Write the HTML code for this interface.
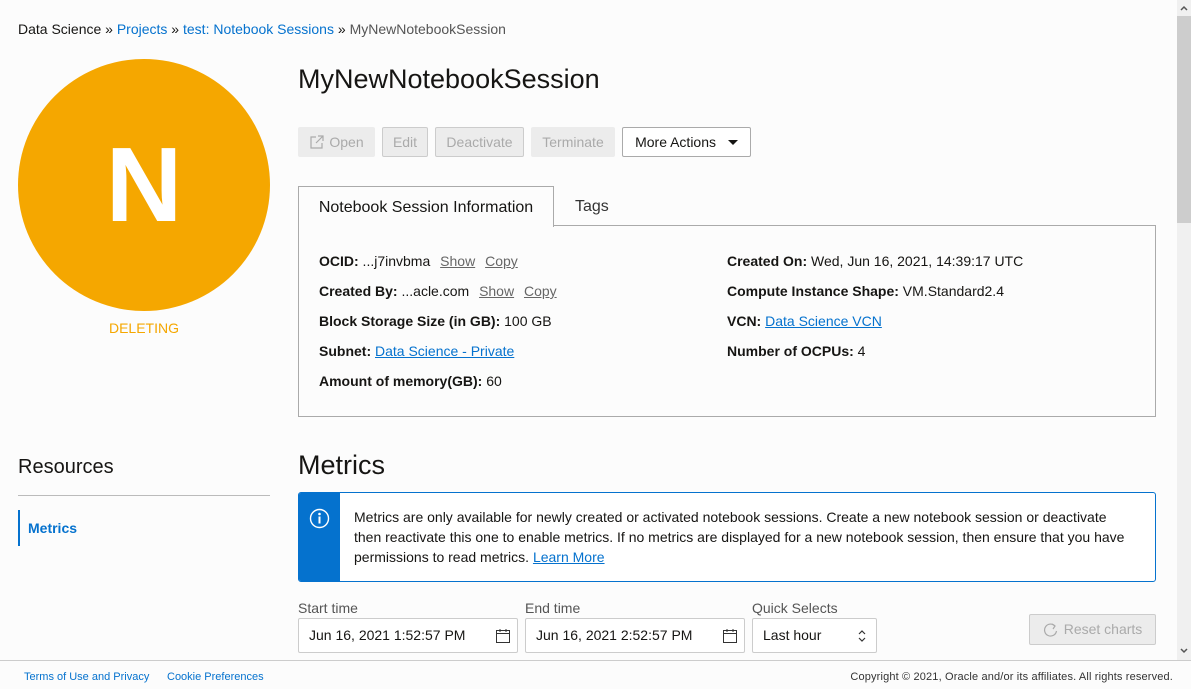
<!DOCTYPE html>
<html><head><style>
*{box-sizing:border-box;margin:0;padding:0}
body{width:1191px;height:689px;overflow:hidden;background:#fcfcfc;font-family:"Liberation Sans",Arial,sans-serif;color:#161513;position:relative;font-size:14px}
.a{position:absolute;white-space:nowrap}
a,.lnk{color:#0572ce;text-decoration:none}
.btn{position:absolute;top:127px;height:30px;border:1px solid #ccc;border-radius:2px;font-size:14px;line-height:28px;text-align:center;color:#aaa;background:#ececec}
.row{position:absolute;font-size:14px;white-space:nowrap}
.row b{font-weight:bold}
.u{text-decoration:underline}
.g{color:#666;text-decoration:underline;margin-left:6px}
.inp{position:absolute;top:618px;height:35px;border:1px solid #ccc;border-radius:2px;background:#fff;font-size:14px;line-height:33px;padding-left:10px}
.lbl{position:absolute;top:600px;font-size:14px;color:#555}
</style></head><body>
<div class="a" style="left:18px;top:21px;font-size:14px">Data Science » <a>Projects</a> » <a>test: Notebook Sessions</a> » <span style="color:#555">MyNewNotebookSession</span></div>
<div class="a" style="left:18px;top:59px;width:252px;height:252px;border-radius:50%;background:#f5a700;color:#fff;font-weight:bold;font-size:106px;text-align:center;line-height:252px">N</div>
<div class="a" style="left:18px;top:320px;width:252px;text-align:center;color:#f5a700;font-size:14px">DELETING</div>
<div class="a" style="left:298px;top:64px;font-size:27px">MyNewNotebookSession</div>
<div class="btn" style="left:298px;width:77px;border-color:#ececec"><svg width="16" height="16" viewBox="0 0 16 16" style="vertical-align:-3px;margin-right:4px"><path d="M7 3H2v11h11V9M9 2h5v5M14 2L7 9" fill="none" stroke="#aaa" stroke-width="1.2"/></svg>Open</div>
<div class="btn" style="left:382px;width:46px">Edit</div>
<div class="btn" style="left:435px;width:89px">Deactivate</div>
<div class="btn" style="left:531px;width:84px;border-color:#ececec">Terminate</div>
<div class="btn" style="left:622px;width:129px;background:#fff;color:#161513;border-color:#aaa">More Actions <span style="display:inline-block;border-left:5px solid transparent;border-right:5px solid transparent;border-top:5px solid #161513;vertical-align:2px;margin-left:8px"></span></div>
<div class="a" style="left:298px;top:225px;width:858px;height:192px;border:1px solid #aaa"></div>
<div class="a" style="left:298px;top:186px;width:256px;height:41px;border:1px solid #aaa;border-bottom:none;background:#fcfcfc;font-size:16px;line-height:42px;text-align:center">Notebook Session Information</div>
<div class="a" style="left:575px;top:198px;font-size:16px;color:#333">Tags</div>
<div class="row" style="left:319px;top:253px"><b>OCID:</b> ...j7invbma <span class="g">Show</span> <span class="g">Copy</span></div>
<div class="row" style="left:319px;top:283px"><b>Created By:</b> ...acle.com <span class="g">Show</span> <span class="g">Copy</span></div>
<div class="row" style="left:319px;top:313px"><b>Block Storage Size (in GB):</b> 100 GB</div>
<div class="row" style="left:319px;top:343px"><b>Subnet:</b> <a class="u">Data Science - Private</a></div>
<div class="row" style="left:319px;top:373px"><b>Amount of memory(GB):</b> 60</div>
<div class="row" style="left:727px;top:253px"><b>Created On:</b> Wed, Jun 16, 2021, 14:39:17 UTC</div>
<div class="row" style="left:727px;top:283px"><b>Compute Instance Shape:</b> VM.Standard2.4</div>
<div class="row" style="left:727px;top:313px"><b>VCN:</b> <a class="u">Data Science VCN</a></div>
<div class="row" style="left:727px;top:343px"><b>Number of OCPUs:</b> 4</div>
<div class="a" style="left:18px;top:456px;font-size:20px">Resources</div>
<div class="a" style="left:18px;top:495px;width:252px;height:1px;background:#bbb"></div>
<div class="a" style="left:18px;top:510px;height:36px;border-left:2px solid #0572ce;padding-left:8px;line-height:36px;font-weight:bold;color:#0572ce">Metrics</div>
<div class="a" style="left:298px;top:450px;font-size:27px">Metrics</div>
<div class="a" style="left:298px;top:492px;width:858px;height:90px;border:1px solid #0572ce;border-radius:3px;background:#fff;overflow:hidden;white-space:normal">
<div style="position:absolute;left:0;top:0;width:41px;height:90px;background:#0572ce"></div>
<svg style="position:absolute;left:10px;top:15px" width="21" height="21" viewBox="0 0 21 21"><circle cx="10.5" cy="10.5" r="9" fill="none" stroke="#fff" stroke-width="1.4"/><circle cx="10.5" cy="6" r="1.3" fill="#fff"/><rect x="9.5" y="8.5" width="2" height="7" fill="#fff"/></svg>
<div style="position:absolute;left:55px;top:14px;font-size:14px;line-height:20px;width:785px;white-space:normal">Metrics are only available for newly created or activated notebook sessions. Create a new notebook session or deactivate<br>then reactivate this one to enable metrics. If no metrics are displayed for a new notebook session, then ensure that you have<br>permissions to read metrics. <a class="u">Learn More</a></div></div>
<div class="lbl" style="left:298px">Start time</div>
<div class="lbl" style="left:525px">End time</div>
<div class="lbl" style="left:752px">Quick Selects</div>
<div class="inp" style="left:298px;width:220px">Jun 16, 2021 1:52:57 PM<svg style="position:absolute;right:6px;top:9px" width="16" height="16" viewBox="0 0 16 16"><rect x="1.5" y="2.5" width="13" height="12" fill="none" stroke="#333"/><path d="M1.5 5.5h13M5 1v3M11 1v3" stroke="#333"/></svg></div>
<div class="inp" style="left:525px;width:220px">Jun 16, 2021 2:52:57 PM<svg style="position:absolute;right:6px;top:9px" width="16" height="16" viewBox="0 0 16 16"><rect x="1.5" y="2.5" width="13" height="12" fill="none" stroke="#333"/><path d="M1.5 5.5h13M5 1v3M11 1v3" stroke="#333"/></svg></div>
<div class="inp" style="left:752px;width:125px">Last hour<svg style="position:absolute;right:10px;top:9px" width="8" height="16" viewBox="0 0 8 16"><path d="M1 6l3-3 3 3M1 10l3 3 3-3" fill="none" stroke="#333" stroke-width="1.2"/></svg></div>
<div class="a" style="left:1029px;top:614px;width:127px;height:31px;border:1px solid #ccc;border-radius:2px;background:#ececec;color:#aaa;line-height:29px;text-align:center;font-size:14px"><svg width="16" height="16" viewBox="0 0 16 16" style="vertical-align:-4px;margin-right:5px"><path d="M12 4A6 6 0 1 0 13.5 9" fill="none" stroke="#aaa" stroke-width="1.2"/><path d="M9 2l3 2-2 3" fill="none" stroke="#aaa" stroke-width="1.2"/></svg>Reset charts</div>
<div class="a" style="left:0;top:660px;width:1191px;height:29px;background:#fcfcfc;border-top:1px solid #ccc"></div>
<div class="a" style="left:24px;top:671px;font-size:11px;color:#0572ce">Terms of Use and Privacy</div>
<div class="a" style="left:167px;top:671px;font-size:11px;color:#0572ce">Cookie Preferences</div>
<div class="a" style="right:18px;top:671px;font-size:11px;color:#333;letter-spacing:0.15px">Copyright © 2021, Oracle and/or its affiliates. All rights reserved.</div>
<div class="a" style="left:1177px;top:0;width:14px;height:660px;background:#f0f0f0"></div>
<div class="a" style="left:1177px;top:16px;width:14px;height:207px;background:#cdcdcd"></div>
<svg class="a" style="left:1179px;top:4px" width="10" height="8" viewBox="0 0 10 8"><path d="M2 6l3-3 3 3" fill="none" stroke="#555" stroke-width="1.5"/></svg>
<svg class="a" style="left:1179px;top:647px" width="10" height="8" viewBox="0 0 10 8"><path d="M2 2l3 3 3-3" fill="none" stroke="#555" stroke-width="1.5"/></svg>
</body></html>
